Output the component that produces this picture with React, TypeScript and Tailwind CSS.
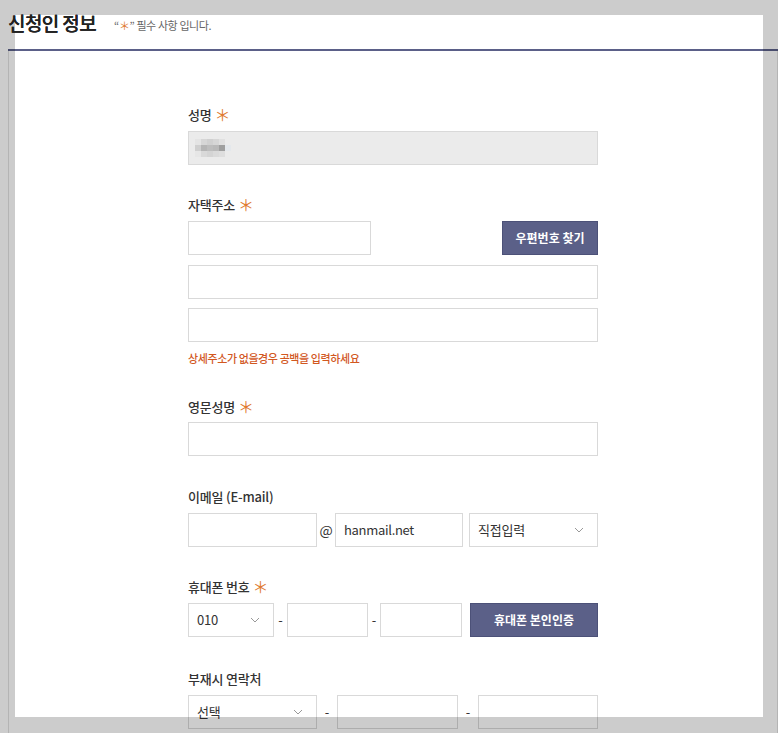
import React from "react";

const font = { fontFamily: '"Noto Sans CJK KR", "Noto Sans", sans-serif' };

function Star() {
  return <span className="text-[#e07a30] ml-[3px] font-normal text-[16px] leading-[16px] align-[-1px]">＊</span>;
}

function Label({ children, req, mt }: { children: React.ReactNode; req?: boolean; mt: string }) {
  return (
    <div className={`${mt} h-[20px] leading-[20px] text-[13px] font-medium text-[#333] tracking-[-0.2px]`}>
      {children}
      {req && <Star />}
    </div>
  );
}

function Chevron() {
  return (
    <svg width="10" height="6" viewBox="0 0 10 6" className="shrink-0">
      <path d="M1 1 L5 5 L9 1" fill="none" stroke="#999" strokeWidth="1" />
    </svg>
  );
}

function Select({ w, text }: { w: string; text: string }) {
  return (
    <div className={`${w} h-[34px] border border-[#d9d9d9] bg-white flex items-center justify-between pl-[8px] pr-[13px] text-[13px] text-[#333] tracking-[-0.2px]`}>
      <span>{text}</span>
      <Chevron />
    </div>
  );
}

function Input({ w, children, gray }: { w: string; children?: React.ReactNode; gray?: boolean }) {
  return (
    <div className={`${w} h-[34px] border border-[#d9d9d9] ${gray ? "bg-[#ebebeb]" : "bg-white"} flex items-center px-[8px] text-[13px] text-[#333] tracking-[-0.3px]`}>
      {children}
    </div>
  );
}

const blur = [
  ["#e4e4e4", "#d6d6d6", "#d0d0d0", "#d6d6d6", "#e0e0e0", "#ebebeb"],
  ["#cfcfcf", "#b5b5b5", "#bdbdbd", "#b9b9b9", "#9f9f9f", "#e4e8ec"],
  ["#e6e6e6", "#d9d9d9", "#d4d4d4", "#dadada", "#dedede", "#ebebeb"],
];

function Title() {
  return <span className="text-[19px] font-medium text-[#222] leading-[26px] tracking-[-0.6px]">신청인 정보</span>;
}

export default function App() {
  return (
    <div className="relative w-[778px] h-[733px] overflow-hidden bg-white" style={font}>
      {/* header */}
      <div className="relative z-10 flex items-end pl-[8px] pt-[6px] h-[36px]">
        <Title />
        <span className="ml-[18px] mb-[3px] text-[11px] text-[#666] leading-[16px] tracking-[-0.4px]">
          “<span className="text-[#e07a30]">＊</span>” 필수 사항 입니다.
        </span>
      </div>
      <div className="ml-[8px] mt-[13px] border-b-2 border-[#5b6088]" />
      <div className="ml-[8px] border-l border-r border-[#e2e2e2] h-[700px]">
        <div className="ml-[179px] w-[410px] pt-[54px]">
          <Label req mt="mt-0">성명</Label>
          <div className="mt-[6px]">
            <Input w="w-[410px]" gray>
              <div className="flex flex-col blur-[0.6px] ml-[-2px]">
                {blur.map((row, i) => (
                  <div key={i} className="flex">
                    {row.map((c, j) => (
                      <div key={j} className="w-[6px] h-[6px]" style={{ backgroundColor: c }} />
                    ))}
                  </div>
                ))}
              </div>
            </Input>
          </div>

          <Label req mt="mt-[30px]">자택주소</Label>
          <div className="mt-[6px] flex justify-between">
            <Input w="w-[183px]" />
            <div className="w-[96px] h-[34px] bg-[#5b6088] border border-[#4c5178] text-white text-[12px] font-bold flex items-center justify-center">
              우편번호 찾기
            </div>
          </div>
          <div className="mt-[10px]">
            <Input w="w-[410px]" />
          </div>
          <div className="mt-[9px]">
            <Input w="w-[410px]" />
          </div>
          <div className="mt-[8px] h-[16px] leading-[16px] text-[11px] font-medium text-[#d2581f] tracking-[-0.4px]">상세주소가 없을경우 공백을 입력하세요</div>

          <Label req mt="mt-[31px]">영문성명</Label>
          <div className="mt-[5px]">
            <Input w="w-[410px]" />
          </div>

          <Label mt="mt-[31px]">이메일 (E-mail)</Label>
          <div className="mt-[6px] flex items-center">
            <Input w="w-[129px]" />
            <div className="w-[18px] text-center text-[14px] text-[#333]">@</div>
            <Input w="w-[128px]">hanmail.net</Input>
            <div className="w-[6px]" />
            <Select w="w-[129px]" text="직접입력" />
          </div>

          <Label req mt="mt-[30px]">휴대폰 번호</Label>
          <div className="mt-[6px] flex items-center">
            <Select w="w-[86px]" text="010" />
            <div className="w-[13px] text-center text-[13px] text-[#333]">-</div>
            <Input w="w-[81px]" />
            <div className="w-[12px] text-center text-[13px] text-[#333]">-</div>
            <Input w="w-[82px]" />
            <div className="w-[8px]" />
            <div className="w-[128px] h-[34px] bg-[#5b6088] border border-[#4c5178] text-white text-[12px] font-bold flex items-center justify-center">
              휴대폰 본인인증
            </div>
          </div>

          <Label mt="mt-[32px]">부재시 연락처</Label>
          <div className="mt-[6px] flex items-center">
            <Select w="w-[129px]" text="선택" />
            <div className="w-[20px] text-center text-[13px] text-[#333]">-</div>
            <Input w="w-[121px]" />
            <div className="w-[20px] text-center text-[13px] text-[#333]">-</div>
            <Input w="w-[120px]" />
          </div>
        </div>
      </div>

      {/* overlay window */}
      <div className="pointer-events-none absolute left-[15px] top-[15px] w-[748px] h-[702px] shadow-[0_0_0_1000px_rgba(0,0,0,0.2)]" />
      {/* title redrawn above overlay */}
      <div className="pointer-events-none absolute left-0 top-0 z-20 flex items-end pl-[8px] pt-[6px] h-[36px]">
        <Title />
      </div>
    </div>
  );
}
